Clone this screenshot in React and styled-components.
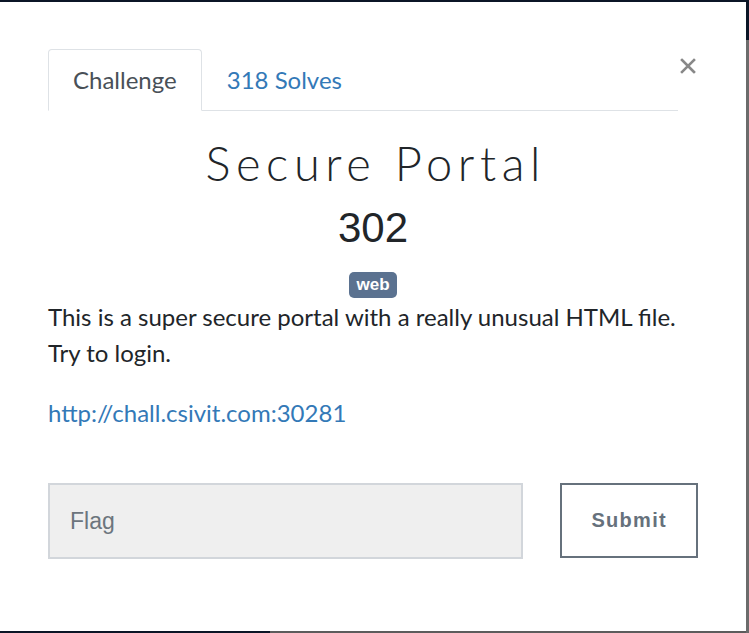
import styled, { createGlobalStyle } from 'styled-components'

const GlobalStyle = createGlobalStyle`
  html, body {
    margin: 0;
    padding: 0;
    background: #0b1526;
    overflow: hidden;
  }
  * { box-sizing: border-box; }
`

const challenge = {
  name: 'Secure Portal',
  value: 302,
  category: 'web',
  solves: 318,
  description: 'This is a super secure portal with a really unusual HTML file. Try to login.',
  link: 'http://chall.csivit.com:30281',
}

const Screen = styled.div`
  width: 749px;
  height: 633px;
  display: grid;
  grid-template-columns: 746px 3px;
  grid-template-rows: 2px 629px 2px;
`

const ScrollTrack = styled.div`
  grid-column: 2;
  grid-row: 1 / 4;
  display: flex;
  flex-direction: column;
  padding-top: 40px;
  &::after {
    content: '';
    flex: 1;
    background: #6b6b6b;
  }
`

const BottomEdge = styled.div`
  grid-column: 1;
  grid-row: 3;
  display: flex;
  padding-left: 270px;
  &::after {
    content: '';
    flex: 1;
    background: #5c5c5c;
  }
`

const Modal = styled.div`
  grid-column: 1;
  grid-row: 2;
  background: #fff;
  padding: 47px 48px 0 48px;
  font-family: Lato, 'Open Sans', sans-serif;
  color: #212529;
`

const Header = styled.div`
  display: flex;
  align-items: flex-start;
`

const Tabs = styled.div`
  flex: 1;
  display: flex;
  border-bottom: 1px solid #dee2e6;
`

const Tab = styled.div`
  padding: 12px 24px;
  font-size: 24px;
  line-height: 36px;
  margin-bottom: -1px;
  border: 1px solid ${p => (p.active ? '#dee2e6' : 'transparent')};
  border-bottom-color: ${p => (p.active ? '#fff' : 'transparent')};
  border-radius: 4px 4px 0 0;
  background: ${p => (p.active ? '#fff' : 'transparent')};
  color: ${p => (p.active ? '#495057' : '#3379b7')};
`

const Close = styled.button`
  width: 20px;
  height: 20px;
  margin-top: 7px;
  padding: 0;
  border: none;
  background: transparent;
  display: flex;
  align-items: center;
  justify-content: center;
`

const Title = styled.h1`
  margin: 25px 0 0;
  text-align: center;
  font-family: Lato, sans-serif;
  font-weight: 300;
  font-size: 47px;
  line-height: 55px;
  letter-spacing: 5.6px;
  text-indent: 5.6px;
  color: #212529;
`

const Value = styled.div`
  text-align: center;
  font-family: 'Liberation Sans', Arial, sans-serif;
  font-size: 42px;
  line-height: 50px;
  margin-top: 12px;
`

const BadgeRow = styled.div`
  display: flex;
  justify-content: center;
  margin-top: 19px;
`

const Badge = styled.span`
  display: inline-flex;
  align-items: center;
  justify-content: center;
  width: 48px;
  height: 26px;
  border-radius: 5px;
  background: #5b7290;
  color: #fff;
  font-family: 'Liberation Sans', Arial, sans-serif;
  font-weight: 700;
  font-size: 17px;
`

const Description = styled.p`
  margin: 1px 0 0;
  font-size: 24px;
  line-height: 36px;
  color: #212529;
`

const Link = styled.a`
  display: block;
  margin-top: 24px;
  font-size: 24px;
  line-height: 36px;
  color: #3379b7;
  text-decoration: none;
`

const SubmitRow = styled.form`
  display: flex;
  gap: 37px;
  margin-top: 52px;
`

const FlagInput = styled.input`
  width: 477px;
  height: 76px;
  padding: 0 20px;
  background: #efefef;
  border: 2px solid #d2d6db;
  font-family: 'Liberation Sans', Arial, sans-serif;
  font-size: 23px;
  color: #495057;
  outline: none;
  &::placeholder { color: #6c757d; }
`

const SubmitButton = styled.button`
  width: 138px;
  height: 75px;
  background: #fff;
  border: 2px solid #66717c;
  font-family: 'Liberation Sans', Arial, sans-serif;
  font-weight: 700;
  font-size: 20px;
  letter-spacing: 1.3px;
  color: #66717c;
`

export default function App() {
  return (
    <>
      <GlobalStyle />
      <Screen>
        <Modal>
          <Header>
            <Tabs>
              <Tab active>Challenge</Tab>
              <Tab>{challenge.solves} Solves</Tab>
            </Tabs>
            <Close aria-label="Close">
              <svg width="16" height="16" viewBox="0 0 16 16">
                <path d="M2 2 L14 14 M14 2 L2 14" stroke="#888" strokeWidth="2.6" strokeLinecap="square" />
              </svg>
            </Close>
          </Header>
          <Title>{challenge.name}</Title>
          <Value>{challenge.value}</Value>
          <BadgeRow>
            <Badge>{challenge.category}</Badge>
          </BadgeRow>
          <Description>{challenge.description}</Description>
          <Link href="#">{challenge.link}</Link>
          <SubmitRow onSubmit={e => e.preventDefault()}>
            <FlagInput placeholder="Flag" />
            <SubmitButton type="submit">Submit</SubmitButton>
          </SubmitRow>
        </Modal>
        <ScrollTrack />
        <BottomEdge />
      </Screen>
    </>
  )
}
